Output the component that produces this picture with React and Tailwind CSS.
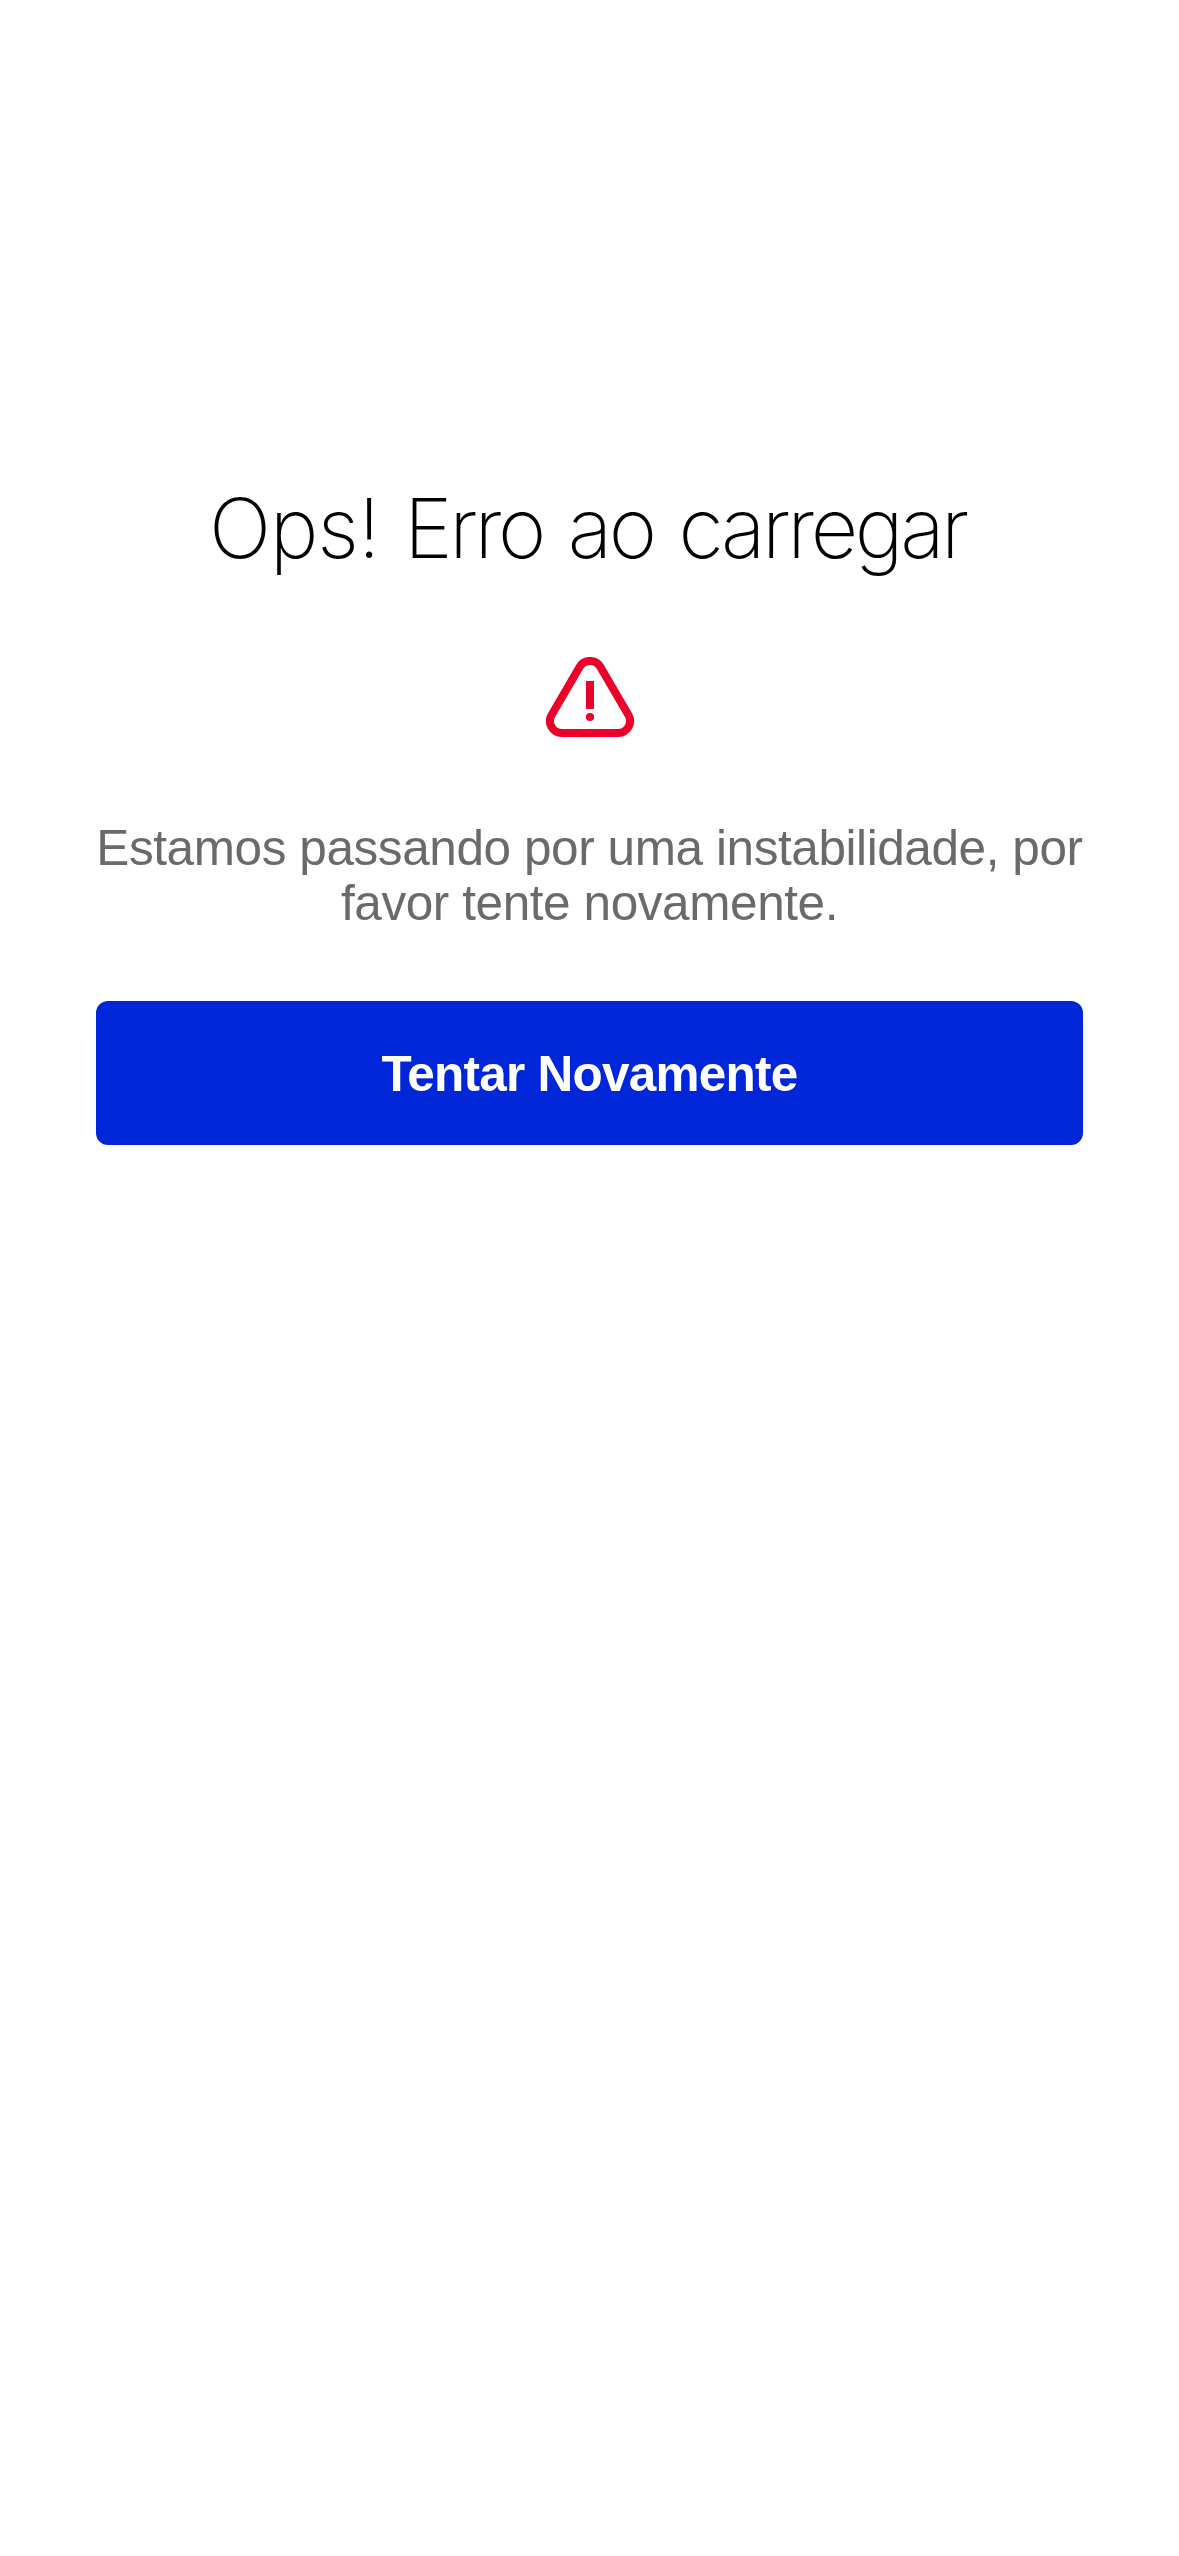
function WarningIcon() {
  return (
    <svg className="block h-20 w-[88px]" viewBox="0 0 88 80" fill="none" aria-hidden="true">
      <path
        d="M33.6 9.95A12 12 0 0 1 54.4 9.95L82.4 57.95A12 12 0 0 1 72 76H16A12 12 0 0 1 5.6 57.95Z"
        stroke="#ec0029"
        strokeWidth="8"
      />
      <path d="M40 24h8v28h-8z" fill="#ec0029" />
      <circle cx="44" cy="60" r="4.1" fill="#ec0029" />
    </svg>
  );
}

export default function App() {
  return (
    <main className="flex min-h-screen flex-col items-center bg-white px-24 pt-[478px] font-['Liberation_Sans',Arial,sans-serif]">
      <h1 className="whitespace-nowrap pr-1 font-['Inter',sans-serif] text-[82.5px] leading-[100px] font-[170] tracking-[-3.4px] [word-spacing:5px] text-black">
        <span className="tracking-[-1.3px]">Ops!</span> Erro ao carregar
      </h1>
      <div className="mt-[79px]">
        <WarningIcon />
      </div>
      <p className="mt-[83px] flex flex-col items-center text-[49.5px] leading-[55px] tracking-[-0.42px] whitespace-nowrap text-[#6a6a6a]">
        <span>Estamos passando por uma instabilidade, por</span>
        <span>favor tente novamente.</span>
      </p>
      <button
        type="button"
        className="mt-[71px] h-36 w-full rounded-xl bg-[#0026d9] pt-0.5 text-[49.5px] leading-[56px] font-bold tracking-[-0.75px] text-white"
      >
        Tentar Novamente
      </button>
    </main>
  );
}
